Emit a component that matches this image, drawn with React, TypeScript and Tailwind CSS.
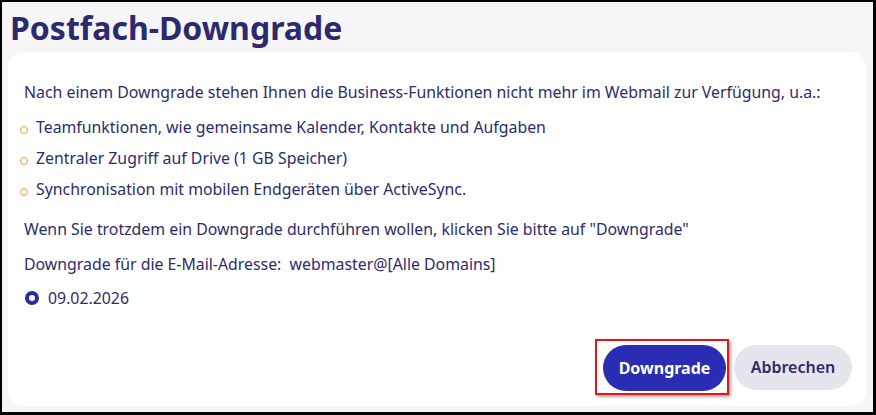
import React from "react";

const features = [
  "Teamfunktionen, wie gemeinsame Kalender, Kontakte und Aufgaben",
  "Zentraler Zugriff auf Drive (1 GB Speicher)",
  "Synchronisation mit mobilen Endgeräten über ActiveSync.",
];

export default function App() {
  return (
    <div
      className="flex h-[415px] w-[876px] flex-col border-t-2 border-r-[3px] border-b-[3px] border-l-2 border-black bg-[#f6f6f9] text-[#2d2b6b]"
      style={{ fontFamily: '"Noto Sans", "Open Sans", sans-serif' }}
    >
      <h1 className="ml-[8px] mt-[4px] h-[46px] text-[32px] leading-[44px] font-bold text-[#2c2a6c]">
        Postfach-Downgrade
      </h1>

      <div className="ml-[6px] mr-[7px] mb-[6px] flex flex-1 flex-col rounded-[16px] bg-white pt-[28px] pr-[14px] pb-[11px] pl-[16px] text-[15.85px] leading-[24px]">
        <p>
          Nach einem Downgrade stehen Ihnen die Business-Funktionen nicht mehr im Webmail zur Verfügung, u.a.:
        </p>

        <ul className="mt-[11px] flex flex-col gap-[7px]">
          {features.map((f) => (
            <li key={f} className="flex items-center">
              <span className="mt-[6px] mr-[8px] ml-[-4px] h-[8px] w-[8px] rounded-full border-[1.5px] border-[#f39a3b]" />
              {f}
            </li>
          ))}
        </ul>

        <p className="mt-[16px]">
          Wenn Sie trotzdem ein Downgrade durchführen wollen, klicken Sie bitte auf "Downgrade"
        </p>

        <p className="mt-[11px]">
          Downgrade für die E-Mail-Adresse:&nbsp; webmaster@[Alle Domains]
        </p>

        <label className="mt-[10px] flex items-center gap-[9px]">
          <span className="ml-[1px] h-[14px] w-[14px] rounded-full border-[4px] border-[#2b2aa6] bg-white" />
          09.02.2026
        </label>

        <div className="mt-auto flex items-center justify-end gap-[5px]">
          <div className="border-2 border-[#e0161b] pt-[4px] pr-[1px] pb-[2px] pl-[6px] shadow-[2px_2px_3px_rgba(0,0,0,0.35)]">
            <button className="h-[46px] w-[123px] rounded-full bg-[#2a2db4] text-[16px] font-bold text-white">
              Downgrade
            </button>
          </div>
          <button className="h-[45px] w-[118px] rounded-full bg-[#e5e5ee] text-[16px] font-semibold text-[#2d2b6b]">
            Abbrechen
          </button>
        </div>
      </div>
    </div>
  );
}
